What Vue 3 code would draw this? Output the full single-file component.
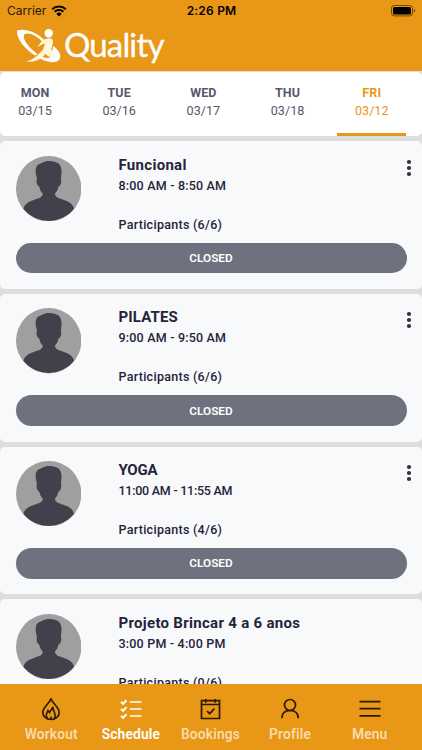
<script setup>
import { ref } from 'vue';

const days = [
  { name: 'MON', date: '03/15' },
  { name: 'TUE', date: '03/16' },
  { name: 'WED', date: '03/17' },
  { name: 'THU', date: '03/18' },
  { name: 'FRI', date: '03/12' }
];
const activeDay = ref('FRI');

const classes = [
  { key: 'funcional', title: 'Funcional', time: '8:00 AM - 8:50 AM', participants: '6/6' },
  { key: 'pilates', title: 'PILATES', time: '9:00 AM - 9:50 AM', participants: '6/6' },
  { key: 'yoga', title: 'YOGA', time: '11:00 AM - 11:55 AM', participants: '4/6' },
  { key: 'projeto', title: 'Projeto Brincar 4 a 6 anos', time: '3:00 PM - 4:00 PM', participants: '0/6', last: true }
];

const tabs = ['Workout', 'Schedule', 'Bookings', 'Profile', 'Menu'];
const activeTab = ref('Schedule');
</script>

<template>
  <div class="screen">
    <header class="header">
      <div class="status">
        <div class="carrier">
          <span>Carrier</span>
          <svg width="16" height="12" viewBox="0 0 16 12">
            <path d="M1.2 4.2a9.8 9.8 0 0 1 13.6 0M3.6 6.8a6.4 6.4 0 0 1 8.8 0" fill="none" stroke="#000" stroke-width="2" />
            <path d="M8 11.4 5.3 8.7a3.9 3.9 0 0 1 5.4 0z" />
          </svg>
        </div>
        <span class="clock">2:26 PM</span>
        <svg class="battery" width="25" height="12" viewBox="0 0 25 12">
          <rect x=".5" y=".5" width="21" height="10.4" rx="2.8" fill="none" stroke="#6d4509" />
          <rect x="2" y="2" width="18" height="7.4" rx="1.5" />
          <path d="M23 4v3.6c1.5-.5 1.5-3.1 0-3.6z" fill="#6d4509" />
        </svg>
      </div>
      <div class="brand">
        <svg width="45" height="36" viewBox="0 0 45 36">
          <path d="M1.3 1.3C-.5 8 8 20 19 26.5L21.5 25C12 18 5.500 9 8.500 5 13 3 21 6.500 26 12.500L28.500 11.500C21 2.500 8-.8 1.300 1.300z" fill="#fff" />
          <path d="M37.300 17C44 22 45.500 27 43.200 30.500 40 35.500 29 33 21 28l2.500-2.500C27 29 31 30 35 28z" fill="#fff" />
          <path d="M30 9.700c3-1.200 8-.5 7 4L35.300 20.500c1 2 4 4 3.200 6.500-2 2.500-6.500 1-9-2-4 4-9.500 9-19 7.500 6-1.500 12-6.500 16.500-12l2-6c-2.500.5-4.500 1.700-7 3.500 1.200-3.500 4.500-7 8-8.300z" fill="#fff6dc" />
          <circle cx="32.7" cy="4.2" r="4.2" fill="#fff" />
        </svg>
        <span>Quality</span>
      </div>
    </header>

    <nav class="days">
      <button
        v-for="day in days"
        :key="day.name"
        class="day"
        :class="{ active: day.name === activeDay }"
        @click="activeDay = day.name"
      >
        <b>{{ day.name }}</b>
        <span>{{ day.date }}</span>
      </button>
    </nav>

    <main class="list">
      <article v-for="item in classes" :key="item.key" class="card">
        <div class="card-top">
          <svg class="avatar" viewBox="0 0 66 66">
            <circle cx="33" cy="33" r="33" fill="#9f9f9f" />
            <path
              d="M7.500 53.500C9 46.500 16 45.500 22 43c3.500-1.500 5-2.500 5-5-2-2-3-4.500-3.500-7-2-.5-3.500-5-2.300-8-1.500-5-2.200-11 .3-13.500 1.500-1.500 3-1.500 4.500-2.500 5-3 13-2.500 17 .5 4 3.500 3 10.500 2.300 15.500 1.200 3-.5 7.500-2.500 8-.5 2.500-1.600 5-3.500 7 0 2.500 1.700 3.500 5 5 6 2.500 13 3.500 14.200 10.500A33 33 0 0 1 7.500 53.500z"
              fill="#42414b"
            />
          </svg>
          <div class="info">
            <h2 :class="item.key">{{ item.title }}</h2>
            <p class="time" :class="item.key">{{ item.time }}</p>
            <p class="participants">Participants ({{ item.participants }})</p>
          </div>
          <svg v-if="!item.last" class="dots" width="6" height="18" viewBox="0 0 6 18">
            <circle cx="3" cy="3" r="2.1" />
            <circle cx="3" cy="9" r="2.1" />
            <circle cx="3" cy="15" r="2.1" />
          </svg>
        </div>
        <button v-if="!item.last" class="closed">CLOSED</button>
      </article>
    </main>

    <footer class="tabbar">
      <button
        v-for="tab in tabs"
        :key="tab"
        class="tab"
        :class="{ active: tab === activeTab }"
        @click="activeTab = tab"
      >
        <svg width="24" height="24" viewBox="0 0 24 24" fill="none" stroke="currentColor" stroke-width="1.7">
          <template v-if="tab === 'Workout'">
            <path d="M12 .8C10 6 3.8 9.5 3.8 14.5a8.2 7 0 0 0 16.4 0C20.2 9.5 14 6 12 .8z" />
            <path d="M9 21.2c-3-3.5-1.500-5.700 0-8.700l1.500 2L14 9c-.5 4 4.500 7.500 1 12.200M12 21.500v-3" stroke-width="1.6" />
          </template>
          <template v-else-if="tab === 'Schedule'">
            <path d="M10.8 4H22.5M10.8 11H22.5M10.8 18H22.5" stroke-width="1.6" />
            <path d="m2 4.1 2 1.7 3.5-3.6M2 11.1l2 1.7 3.5-3.6M2 18.1l2 1.7 3.5-3.6" stroke-width="2" />
          </template>
          <template v-else-if="tab === 'Bookings'">
            <path d="M3.5 2.7h18v17.8h-18zM3.5 6.500h18M7.8 1v3.7M17.2 1v3.7M9 13l2.7 2.7 4.8-5.2" />
          </template>
          <template v-else-if="tab === 'Profile'">
            <circle cx="12" cy="7" r="5.5" />
            <path d="M3.8 20.2c0-5.2 3.2-7.7 8.2-7.7s8.2 2.5 8.2 7.7" />
          </template>
          <template v-else>
            <path d="M1.500 3.700h21M1.500 10.700h21M1.500 17.900h21" />
          </template>
        </svg>
        <span>{{ tab }}</span>
      </button>
    </footer>
  </div>
</template>

<style>
body { margin: 0; overflow: hidden; }
</style>

<style scoped>
* { box-sizing: border-box; }
.screen {
  width: 422px; height: 750px; overflow: hidden; display: flex; flex-direction: column;
  background: #dedee0; color: #25233a; font-family: Roboto, sans-serif;
}
button { border: none; padding: 0; margin: 0; background: none; font-family: inherit; cursor: pointer; white-space: nowrap; }
.header { flex: none; height: 71px; background: #e99717; }
.status {
  height: 22px; padding: 0 6px 0 7px; display: grid; grid-template-columns: 1fr auto 1fr; align-items: center;
  color: #000; font: 12px/22px Inter, sans-serif;
}
.carrier { display: flex; align-items: center; gap: 5px; color: #2b1c05; }
.clock { font-weight: 600; letter-spacing: 0.2px; }
.battery { justify-self: end; }
.brand { display: flex; padding: 7px 0 0 16px; color: #fff; }
.brand span { margin: -3px 0 0 3px; font: 33px/36px Lato, sans-serif; letter-spacing: -0.85px; -webkit-text-stroke: 0.3px #fff; }
.days {
  flex: none; height: 64px; margin-top: 1px; padding-left: 0.5px; display: flex; gap: 15.2px;
  background: #fff; border-radius: 5px; color: #585768;
}
.day { flex: none; width: 69px; display: flex; flex-direction: column; align-items: center; padding-top: 12px; color: inherit; font-size: 12.6px; line-height: 18px; border-bottom: 3px solid transparent; }
.day b { font-size: 12.5px; letter-spacing: 0.1px; }
.day.active { color: #e99717; border-color: #e99717; }
.list { flex: 1; min-height: 0; overflow: hidden; padding-top: 5px; display: flex; flex-direction: column; gap: 5px; }
.card { flex: none; height: 147.8px; padding: 14.5px 15.5px; background: #f8f9fb; border-radius: 5px; }
.card-top { display: flex; height: 87px; }
.avatar { flex: none; width: 65.4px; height: 65.4px; }
.info { flex: 1; padding-left: 37.6px; }
h2, p { margin: 0; white-space: nowrap; }
h2 { font-size: 15px; line-height: 19px; font-weight: 700; letter-spacing: 0.3px; }
h2.pilates { letter-spacing: 0.15px; }
h2.yoga { letter-spacing: -0.2px; }
p { font-size: 12.5px; line-height: 18px; font-weight: 500; letter-spacing: 0.2px; }
.time { margin-top: 2px; }
.time.yoga { letter-spacing: -0.25px; }
.participants { margin-top: 21px; letter-spacing: 0.28px; }
.dots { margin: 3px -5px 0 0; fill: #302f39; }
.closed {
  display: block; width: 100%; height: 30.5px; border-radius: 16px; background: #70717e; color: #fff;
  font-size: 11.8px; line-height: 30px; font-weight: 600;
}
.tabbar { flex: none; height: 66.5px; padding: 0 12.5px 0 11.5px; display: flex; background: #e99717; }
.tab { flex: 1; display: flex; flex-direction: column; align-items: center; padding-top: 14px; color: #2b1b05; }
.tab span { margin-top: 3px; color: #f9dbab; font-size: 13.8px; line-height: 19px; font-weight: 600; letter-spacing: 0.15px; }
.tab.active, .tab.active span { color: #fff; }
</style>
